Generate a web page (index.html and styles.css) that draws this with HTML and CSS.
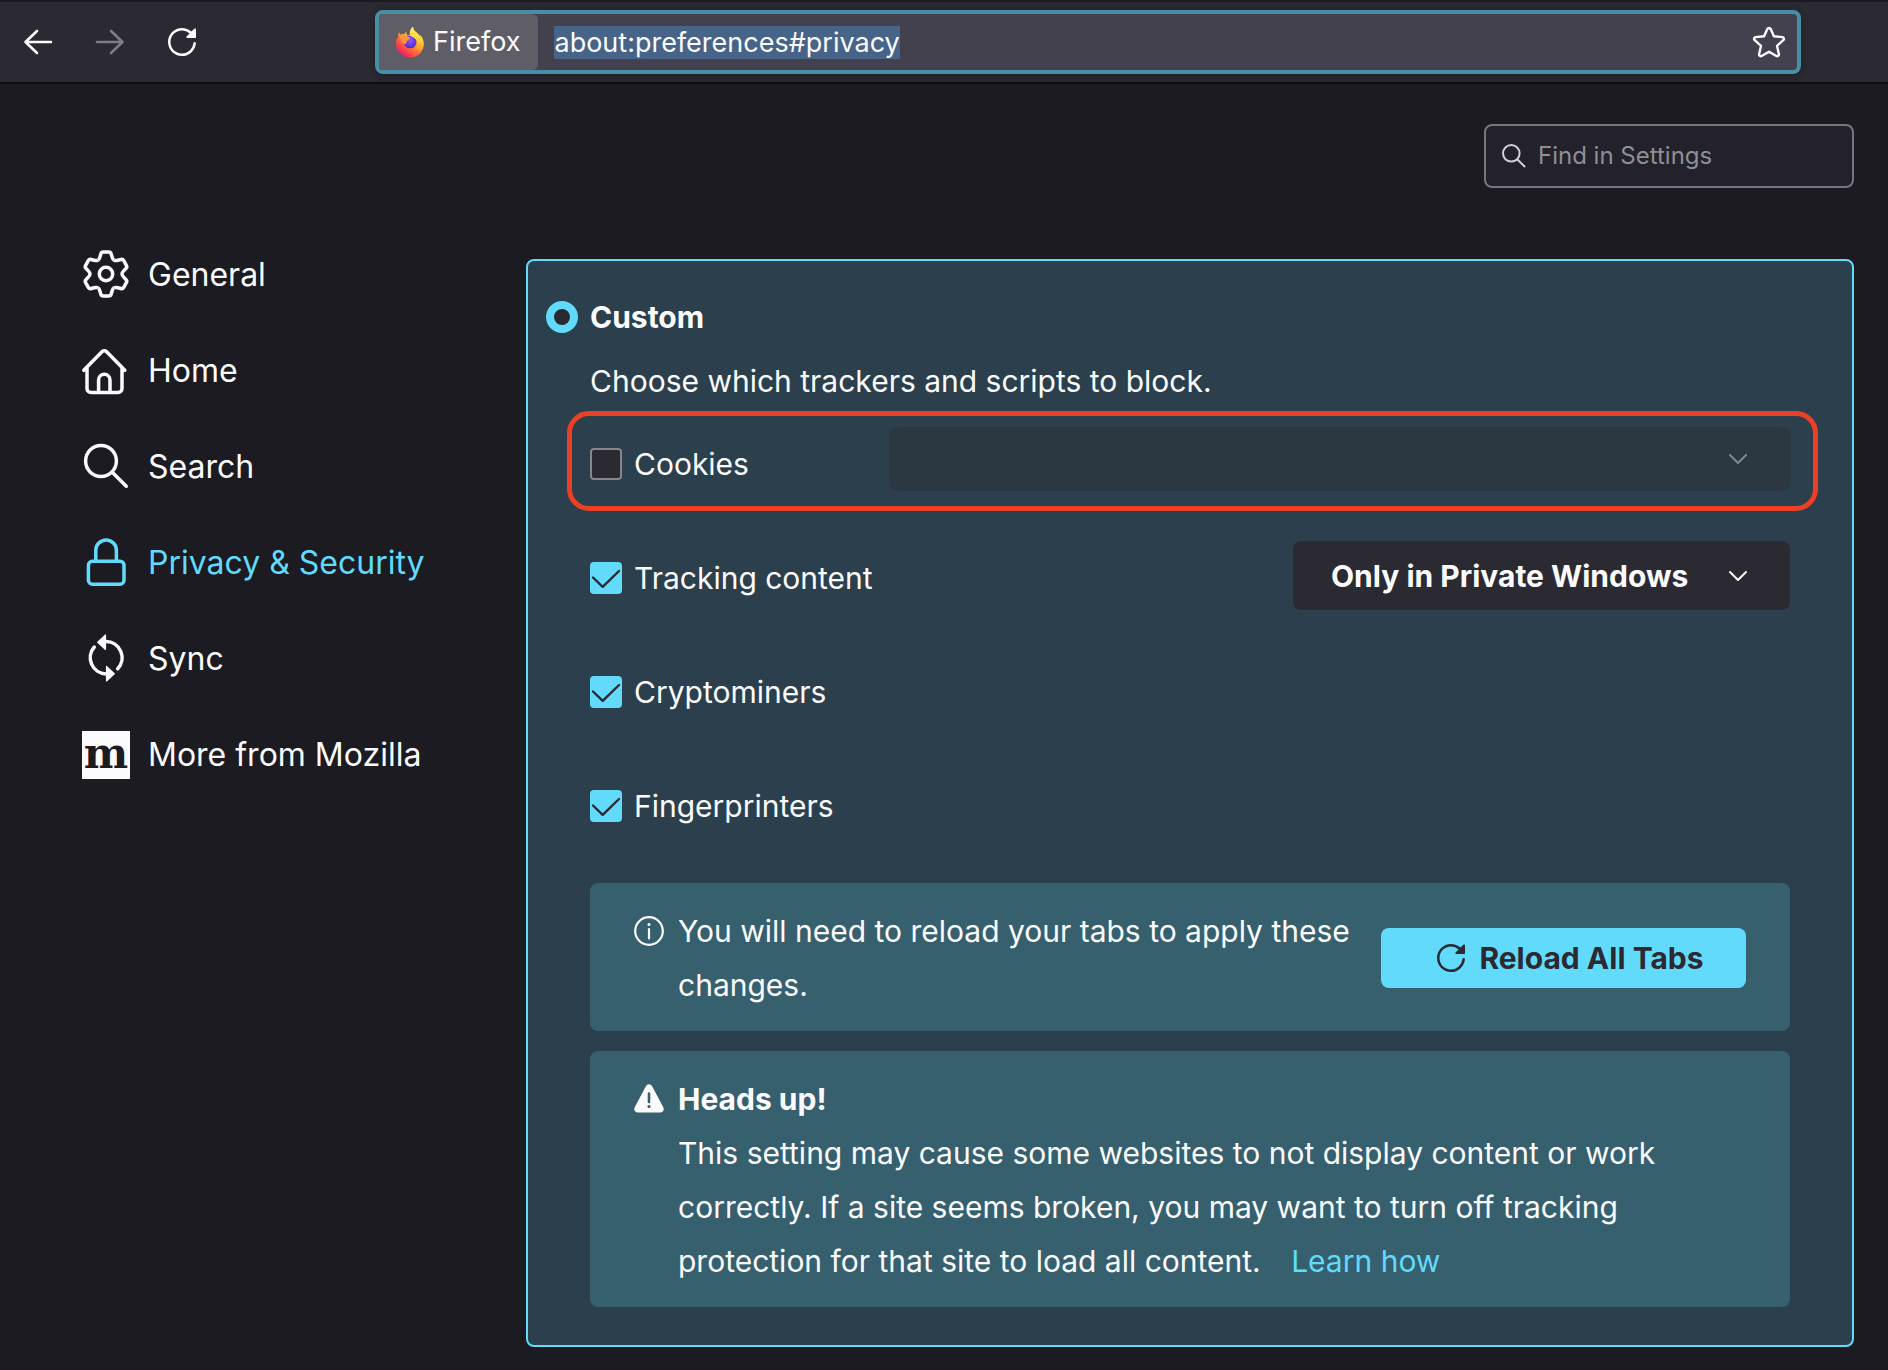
FILE: index.html
```html
<!DOCTYPE html>
<html lang="en">
<head>
<meta charset="utf-8">
<meta name="viewport" content="width=device-width, initial-scale=1">
<title>Settings</title>
<link rel="stylesheet" href="styles.css">
</head>
<body>
<header class="toolbar">
  <div class="nav-buttons">
    <button class="icon-button" type="button" aria-label="Back">
      <svg width="32" height="32" viewBox="0 0 32 32" fill="none" stroke="currentColor" stroke-width="2.600" stroke-linecap="round" stroke-linejoin="round"><path d="M29 16H3.500M15 5 3.500 16 15 27"/></svg>
    </button>
    <button class="icon-button" type="button" aria-label="Forward" disabled>
      <svg width="32" height="32" viewBox="0 0 32 32" fill="none" stroke="currentColor" stroke-width="2.600" stroke-linecap="round" stroke-linejoin="round"><path d="M3 16h25.500M17 5l11.500 11L17 27"/></svg>
    </button>
    <button class="icon-button" type="button" aria-label="Reload">
      <svg width="32" height="32" viewBox="0 0 16 16" fill="currentColor"><path d="M10.707 6H14.7l.3-.3V1.707a.5.5 0 0 0-.854-.354l-1.459 1.459A6.95 6.95 0 0 0 8 1C4.141 1 1 4.141 1 8s3.141 7 7 7a6.97 6.97 0 0 0 6.968-6.322.626.626 0 0 0-.562-.682.635.635 0 0 0-.682.562A5.726 5.726 0 0 1 8 13.75c-3.171 0-5.75-2.579-5.75-5.75S4.829 2.25 8 2.25a5.71 5.71 0 0 1 3.805 1.445l-1.451 1.451a.5.5 0 0 0 .353.854z"/></svg>
    </button>
  </div>
  <div class="urlbar">
    <div class="identity">
      <svg width="32" height="32" viewBox="0 0 32 32">
        <defs>
          <linearGradient id="flame" x1="0.85" y1="0.1" x2="0.2" y2="0.95"><stop offset="0" stop-color="#fff44f"/><stop offset="0.35" stop-color="#ffb52c"/><stop offset="0.6" stop-color="#ff7139"/><stop offset="0.85" stop-color="#f6384e"/><stop offset="1" stop-color="#e31587"/></linearGradient>
          <radialGradient id="globe" cx="0.5" cy="0.4" r="0.6"><stop offset="0" stop-color="#8a5cf5"/><stop offset="0.6" stop-color="#6a3be0"/><stop offset="1" stop-color="#4a2bb0"/></radialGradient>
          <linearGradient id="tail" x1="0.6" y1="0" x2="0.5" y2="1"><stop offset="0" stop-color="#fff36a"/><stop offset="0.6" stop-color="#ffc83a"/><stop offset="1" stop-color="#ff8a36"/></linearGradient>
        </defs>
        <path fill="url(#flame)" d="M5 6.200c.8 1 1.300 1.700 1.700 2.400 1.400-.9 2.600-.9 3.800-.7.300-1 .9-1.800 1.800-2.500-.2 2.100.4 3 1.700 3.800l2-.2C15 6 16.300 3 19 .8c.2 2.900 1.600 4.200 3.800 6 1.200 1 2.200 2 3 3.400.5-.2.600-.8.500-1.500 2.200 2.900 3.700 5.900 3.500 9.500C29.500 25.800 23.600 31.500 16 31.500 8 31.500 2 25.500 2 17.500c0-2.800.7-4.500 2-6.500-.1-1.900.2-3.200 1-4.800z"/>
        <circle cx="16.200" cy="16" r="6.300" fill="url(#globe)"/>
        <path fill="url(#tail)" d="M19 .8c.2 2.900 1.600 4.200 3.800 6 3 2.500 4.700 5.400 4.400 9.400-.3 4-2.700 7.300-6.700 8.300 3.500-3.300 3.500-8 1.300-11-1.500-2-3.500-2.300-5.400-3.700C15.400 6 16.300 3 19 .8z"/>
        <path fill="#ff9640" d="M5.500 10c3-1.300 5.500-1 7.500.4.900.6 2 1 3.500 1.100.2 1.600-2.300 2.100-3.300 3.200-1 1.200-.6 3.300-1.600 3.300C8.400 17.500 6.500 14 5.500 10z"/>
      </svg>
      <span>Firefox</span>
    </div>
    <div class="address"><input class="address-input" type="text" size="24" value="about:preferences#privacy" aria-label="Address"></div>
    <button class="icon-button" type="button" aria-label="Bookmark this page">
      <svg width="36" height="36" viewBox="0 0 36 36" fill="none" stroke="currentColor" stroke-width="2.400" stroke-linejoin="round"><path d="M16.300 5a2 2 0 0 1 3.400 0l3.200 7.200 8.500.9a1.700 1.700 0 0 1 .9 3l-6.300 5.700 1.900 8.400a1.700 1.700 0 0 1-2.500 1.800L18 27.700 10.600 32a1.700 1.700 0 0 1-2.500-1.800L10 21.800 3.700 16.100a1.700 1.700 0 0 1 .9-3l8.500-.9z"/></svg>
    </button>
  </div>
</header>

<main class="page">
  <div class="search-row">
    <label class="find">
      <svg width="32" height="32" viewBox="0 0 32 32" fill="none" stroke="currentColor" stroke-width="2" stroke-linecap="round"><circle cx="13.300" cy="13.300" r="8.300"/><path d="m19.500 19.500 7 7"/></svg>
      <input class="find-input" type="search" placeholder="Find in Settings" aria-label="Find in Settings">
    </label>
  </div>

  <div class="columns">
    <nav class="sidebar" aria-label="Categories">
      <a class="category" href="#general">
        <svg class="category-icon" viewBox="0 0 48 48" fill="none" stroke="currentColor" stroke-width="3.500">
          <defs><path id="cog" d="M-.2-22H2.600Q4.700-22 5.200-20L6-17.200Q6.700-14.600 8-13.860"/></defs>
          <g transform="translate(24 23)">
            <use href="#cog"/><use href="#cog" transform="rotate(60)"/><use href="#cog" transform="rotate(120)"/><use href="#cog" transform="rotate(180)"/><use href="#cog" transform="rotate(240)"/><use href="#cog" transform="rotate(300)"/>
            <use href="#cog" transform="scale(-1 1)"/><use href="#cog" transform="rotate(60) scale(-1 1)"/><use href="#cog" transform="rotate(120) scale(-1 1)"/><use href="#cog" transform="rotate(180) scale(-1 1)"/><use href="#cog" transform="rotate(240) scale(-1 1)"/><use href="#cog" transform="rotate(300) scale(-1 1)"/>
            <circle r="6.700"/>
          </g>
        </svg>
        <span>General</span>
      </a>
      <a class="category" href="#home">
        <svg class="category-icon" viewBox="0 0 48 48" fill="none" stroke="currentColor" stroke-width="3.500" stroke-linecap="round"><path d="M1.800 23.300 20.200 4.600a3 3 0 0 1 4.200 0L42.800 23.300M5 21v20.500a4 4 0 0 0 4 4h27a4 4 0 0 0 4-4V21M16.600 45V33a5.700 5.700 0 0 1 11.400 0v12"/></svg>
        <span>Home</span>
      </a>
      <a class="category" href="#search">
        <svg class="category-icon" viewBox="0 0 48 48" fill="none" stroke="currentColor" stroke-width="3.500" stroke-linecap="round"><circle cx="19" cy="18" r="15.400"/><path d="m30 29 14.300 14.200"/></svg>
        <span>Search</span>
      </a>
      <a class="category is-selected" href="#privacy" aria-current="page">
        <svg class="category-icon" viewBox="0 0 48 48" fill="none" stroke="currentColor" stroke-width="3.500"><rect x="6.400" y="22.300" width="35.600" height="23" rx="4"/><path d="M13.800 22V11.200a10.300 10.300 0 0 1 20.600 0V22"/></svg>
        <span>Privacy &amp; Security</span>
      </a>
      <a class="category" href="#sync">
        <svg class="category-icon" viewBox="0 0 48 48" fill="none" stroke="currentColor" stroke-width="3.500" stroke-linecap="round"><path d="M24 6.500a16.200 16.200 0 0 1 11.700 27.300M24 38.900A16.200 16.200 0 0 1 12.300 12"/><path d="M23.500 0v14.500L15.700 7.300zM24.500 31.500V46l7.800-7.300z" fill="currentColor" stroke-width="1.200" stroke-linejoin="round"/></svg>
        <span>Sync</span>
      </a>
      <a class="category" href="#more">
        <span class="category-icon mozilla" aria-hidden="true">m</span>
        <span>More from Mozilla</span>
      </a>
    </nav>

    <section class="panel">
      <label class="mode"><input class="radio" type="radio" name="mode" checked>Custom</label>
      <p class="description">Choose which trackers and scripts to block.</p>

      <div class="row row-highlighted">
        <label class="option"><input class="checkbox" type="checkbox">Cookies</label>
        <div class="menu menu-wide">
          <select class="select" aria-label="Cookies to block" disabled><option></option></select>
          <svg class="chevron" viewBox="0 0 20 12" fill="none" stroke="currentColor" stroke-width="2" stroke-linecap="round" stroke-linejoin="round"><path d="m2 2 8 8 8-8"/></svg>
        </div>
      </div>
      <div class="rows">
        <div class="row">
          <label class="option"><input class="checkbox" type="checkbox" checked>Tracking content</label>
          <div class="menu">
            <select class="select" aria-label="Where to block tracking content"><option>Only in Private Windows</option><option>In all windows</option></select>
            <svg class="chevron" viewBox="0 0 20 12" fill="none" stroke="currentColor" stroke-width="2" stroke-linecap="round" stroke-linejoin="round"><path d="m2 2 8 8 8-8"/></svg>
          </div>
        </div>
        <div class="row"><label class="option"><input class="checkbox" type="checkbox" checked>Cryptominers</label></div>
        <div class="row"><label class="option"><input class="checkbox" type="checkbox" checked>Fingerprinters</label></div>
      </div>

      <div class="notices">
        <div class="notice">
          <svg class="notice-icon" viewBox="0 0 30 54" fill="none" stroke="currentColor" stroke-width="2.200"><circle cx="15" cy="27" r="13.800"/><path d="M15 25v9.500" stroke-linecap="round"/><circle cx="15" cy="20.500" r="1.500" fill="currentColor" stroke="none"/></svg>
          <p class="notice-text">You will need to reload your tabs to apply these changes.</p>
          <button class="reload-button" type="button">
            <svg width="32" height="32" viewBox="0 0 16 16" fill="currentColor"><path d="M10.707 6H14.7l.3-.3V1.707a.5.5 0 0 0-.854-.354l-1.459 1.459A6.95 6.95 0 0 0 8 1C4.141 1 1 4.141 1 8s3.141 7 7 7a6.97 6.97 0 0 0 6.968-6.322.626.626 0 0 0-.562-.682.635.635 0 0 0-.682.562A5.726 5.726 0 0 1 8 13.750c-3.171 0-5.750-2.579-5.750-5.750S4.829 2.250 8 2.250a5.710 5.710 0 0 1 3.805 1.445l-1.451 1.451a.5.5 0 0 0 .353.854z"/></svg>
            Reload All Tabs
          </button>
        </div>
        <div class="notice">
          <svg class="notice-icon" viewBox="0 0 30 54"><path fill="currentColor" d="M12 14a3.400 3.400 0 0 1 6 0l11.400 21.500a3.400 3.400 0 0 1-3 5H3.600a3.400 3.400 0 0 1-3-5z"/><path d="M15 21.500v8.500" stroke="#37606f" stroke-width="2.600" stroke-linecap="round"/><circle cx="15" cy="34.500" r="1.600" fill="#37606f"/></svg>
          <div class="notice-text">
            <h2 class="notice-title">Heads up!</h2>
            <p class="notice-body">This setting may cause some websites to not display content or work correctly. If a site seems broken, you may want to turn off tracking protection for that site to load all content. <a class="learn" href="#learn">Learn how</a></p>
          </div>
        </div>
      </div>
    </section>
  </div>
</main>
</body>
</html>
```
FILE: styles.css
```css
:root {
  --accent: #61dafb;
  --text: #fbfbfe;
  --dark: #2b2a33;
  --page: #1c1b22;
  --panel: #2b404c;
  --notice: #37606f;
}

* {
  box-sizing: border-box;
}

body {
  margin: 0;
  background: var(--page);
  color: var(--text);
  font: 30px/54px Inter, "Liberation Sans", sans-serif;
}

button,
input,
select {
  margin: 0;
  padding: 0;
  border: 0;
  background: none;
  color: inherit;
  font: inherit;
}

p,
h2 {
  margin: 0;
}

svg {
  display: block;
  flex: none;
  overflow: visible;
}

/* Browser toolbar */
.toolbar {
  display: flex;
  align-items: center;
  height: 84px;
  padding: 0 87px 0 22px;
  border-top: 2px solid var(--page);
  border-bottom: 2px solid #0c0c0d;
  background: var(--dark);
}

.nav-buttons {
  display: flex;
  flex: none;
  gap: 40px;
  width: 353px;
}

.icon-button {
  display: flex;
}

.icon-button:disabled {
  color: #7e7d83;
}

.urlbar {
  display: flex;
  flex: 1;
  align-items: center;
  height: 64px;
  padding-right: 10px;
  border: 4px solid #478fa7;
  border-radius: 8px;
  background: #42414d;
  box-shadow: 0 2px 8px rgb(0 0 0 / 30%);
  font-size: 27px;
}

.identity {
  display: flex;
  align-items: center;
  gap: 7px;
  height: 56px;
  padding: 0 18px 0 15px;
  border-radius: 4px 6px 6px 4px;
  background: #5f5e67;
}

.address {
  display: flex;
  flex: 1;
  padding-left: 16px;
}

.address-input {
  height: 33px;
  background: #476387;
  line-height: 33px;
  field-sizing: content;
}

/* Settings page */
.page {
  padding: 40px 34px 23px 82px;
}

.search-row {
  display: flex;
  justify-content: flex-end;
  margin-bottom: 63px;
}

.find {
  display: flex;
  align-items: center;
  gap: 8px;
  width: 370px;
  height: 64px;
  padding: 0 12px;
  border: 2px solid #77767d;
  border-radius: 8px;
  background: #23222b;
  color: #d0d0d4;
}

.find-input {
  flex: 1;
  min-width: 0;
  font-size: 24px;
  line-height: 32px;
}

.find-input::placeholder {
  color: #8f8f95;
}

.columns {
  display: grid;
  grid-template-columns: 444px 1fr;
  align-items: start;
}

.sidebar {
  display: grid;
  gap: 48px;
}

.category {
  display: flex;
  align-items: center;
  gap: 18px;
  height: 48px;
  color: inherit;
  font-size: 32px;
  line-height: 48px;
  text-decoration: none;
}

.category-icon {
  flex: none;
  width: 48px;
  height: 48px;
}

.is-selected {
  color: var(--accent);
}

.mozilla {
  background: var(--text);
  color: var(--page);
  font: bold 42px/46px "DejaVu Serif", serif;
  text-align: center;
}

/* Custom protection panel */
.panel {
  margin-top: 8px;
  padding: 29px 62px 38px;
  border: 2px solid var(--accent);
  border-radius: 8px;
  background: var(--panel);
}

.mode {
  display: flex;
  align-items: center;
  gap: 12px;
  margin-left: -44px;
  font-weight: 700;
}

.radio {
  width: 32px;
  height: 32px;
  border: 8px solid var(--accent);
  border-radius: 50%;
  appearance: none;
  background: var(--dark);
}

.description {
  margin-top: 10px;
}

.rows {
  display: grid;
  gap: 45px;
  margin: 30px 0 45px;
}

.row {
  display: flex;
  align-items: center;
  justify-content: space-between;
  min-height: 69px;
}

.row-highlighted {
  align-items: flex-end;
  margin: 3px -28px 0 -23px;
  padding: 11px 23px 15px 18px;
  border: 5px solid #ec4026;
  border-radius: 22px;
}

.option {
  display: flex;
  align-items: center;
  gap: 12px;
  padding-top: 5px;
}

.checkbox {
  width: 32px;
  height: 32px;
  border: 2px solid #87868c;
  border-radius: 4px;
  appearance: none;
  background: var(--dark);
}

.checkbox:checked {
  border: 0;
  background: var(--accent) url("data:image/svg+xml,%3Csvg xmlns='http://www.w3.org/2000/svg' viewBox='0 0 32 32' fill='none' stroke='%232b2a33' stroke-width='2.4' stroke-linecap='round' stroke-linejoin='round'%3E%3Cpath d='M3 15.500l9.700 9.300L29 9'/%3E%3C/svg%3E");
}

.menu {
  display: grid;
  align-items: center;
  min-width: 497px;
  height: 69px;
  border-radius: 8px;
  background: var(--dark);
}

.menu-wide {
  width: 75%;
  max-width: 900px;
  height: 64px;
  background: #2b3842;
  color: #7c868d;
}

.select,
.chevron {
  grid-area: 1 / 1;
}

.select {
  width: 100%;
  height: 100%;
  padding: 0 90px 0 38px;
  appearance: none;
  font-weight: 700;
  opacity: 1;
}

.chevron {
  justify-self: end;
  width: 20px;
  height: 12px;
  margin-right: 42px;
  pointer-events: none;
}

.notices {
  display: grid;
  gap: 20px;
}

.notice {
  display: flex;
  gap: 14px;
  padding: 21px 44px 19px;
  border-radius: 8px;
  background: var(--notice);
}

.notice-icon {
  width: 30px;
  height: 54px;
}

.notice-text {
  flex: 1;
}

.notice-title {
  font-size: 30px;
  font-weight: 700;
}

.notice-body {
  max-width: 990px;
}

.learn {
  margin-left: 22px;
  color: var(--accent);
  text-decoration: none;
}

.reload-button {
  display: flex;
  align-items: center;
  align-self: center;
  justify-content: center;
  gap: 12px;
  min-width: 365px;
  height: 60px;
  padding-left: 12px;
  border-radius: 8px;
  background: var(--accent);
  color: var(--dark);
  font-weight: 700;
}
```
